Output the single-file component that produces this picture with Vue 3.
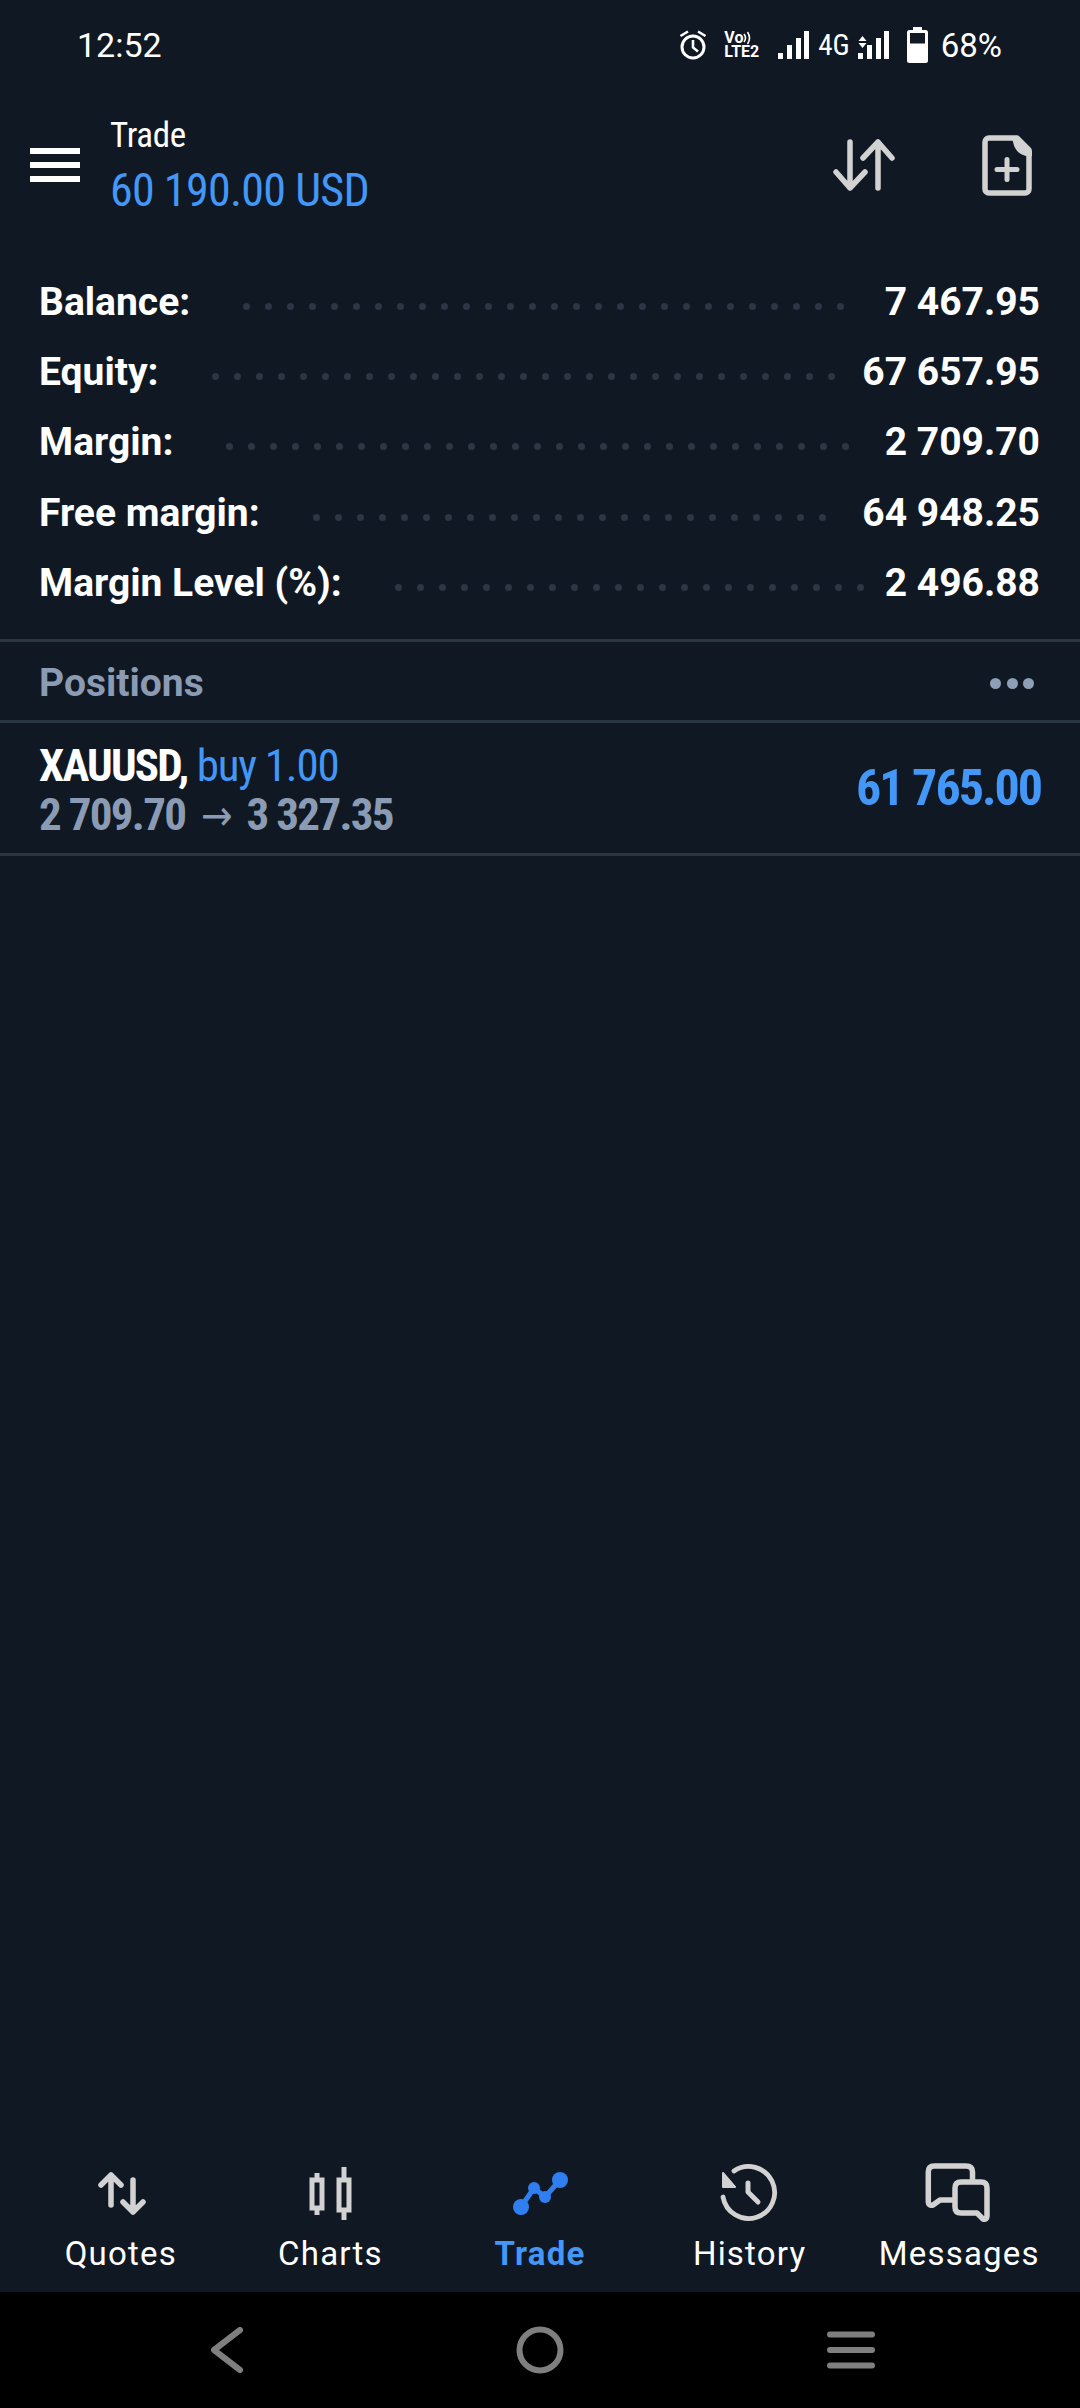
<template>
  <div class="screen">
    <div class="status-bar">
      <span class="time">12:52</span>
      <div class="status-icons">
        <svg class="alarm" width="28" height="30" viewBox="0 0 28 30" fill="none" stroke="#fff">
          <circle cx="14" cy="17" r="11" stroke-width="3" />
          <path d="M14 10v7.500l5 4" stroke-width="2.600" />
          <path d="M1.500 6L9 1.500M26.500 6L19 1.500" stroke-width="2.600" />
        </svg>
        <div class="volte">
          <span>Vo<br />LTE2</span>
          <svg class="volte-waves" width="12" height="14" viewBox="0 0 12 14" fill="none" stroke="#fff" stroke-width="1.600">
            <path d="M2 3q3 4 0 8M5.500 1q4 6 0 12" />
          </svg>
        </div>
        <svg class="signal" width="31" height="28" viewBox="0 0 31 28" fill="#fff">
          <rect x="0" y="22" width="5" height="6" />
          <rect x="9" y="14" width="5" height="14" />
          <rect x="18" y="7" width="5" height="21" />
          <rect x="26" y="0" width="5" height="28" />
        </svg>
        <span class="net">4G</span>
        <svg class="signal-two" width="31" height="28" viewBox="0 0 31 28" fill="#fff">
          <path d="M4.500 5l4 5h-8zM4.500 17l-4-5h8z" />
          <rect x="0" y="22" width="5" height="6" />
          <rect x="9" y="14" width="5" height="14" />
          <rect x="18" y="7" width="5" height="21" />
          <rect x="26" y="0" width="5" height="28" />
        </svg>
        <svg class="battery" width="21" height="36" viewBox="0 0 21 36" fill="#fff">
          <path d="M6 0h9v3h3.500q2.500 0 2.500 2.500v28q0 2.500-2.500 2.500h-16q-2.500 0-2.500-2.500v-28q0-2.500 2.500-2.500h3.500z" />
          <rect x="3" y="6" width="15" height="10.500" fill="#101923" />
        </svg>
        <span class="percent">68%</span>
      </div>
    </div>

    <header class="app-header">
      <div class="burger"><span></span><span></span><span></span></div>
      <div class="titles">
        <div class="title cond">Trade</div>
        <div class="subtitle cond">60 190.00 USD</div>
      </div>
      <svg class="sort-icon" width="70" height="60" viewBox="0 0 70 60" fill="none" stroke="#d2d2d2" stroke-width="5.500" stroke-linecap="round" stroke-linejoin="round">
        <path d="M21 7v46M7 37l14 16 15-16" />
        <path d="M49 53V7M34 23L49 7l14 16" />
      </svg>
      <svg class="doc-icon" width="50" height="61" viewBox="0 0 50 61" fill="none">
        <path d="M8 3h27l12 12v39a4 4 0 0 1-4 4H7a4 4 0 0 1-4-4V7a4 4 0 0 1 4-4z" stroke="#d2d2d2" stroke-width="5.500" stroke-linejoin="round" />
        <path d="M30 1h5l15 15v5q-18 2-20-20z" fill="#d2d2d2" />
        <path d="M25 24.500v20M15 34.500h20" stroke="#d2d2d2" stroke-width="5" stroke-linecap="round" />
      </svg>
    </header>

    <section class="summary">
      <div v-for="row in summary" :key="row.label" class="summary-row">
        <span class="summary-label">{{ row.label }}</span>
        <span class="dots">
          <i v-for="n in row.dots" :key="n"></i>
        </span>
        <span class="summary-value">{{ row.value }}</span>
      </div>
    </section>

    <div class="section-head">
      <span>Positions</span>
      <div class="more"><i></i><i></i><i></i></div>
    </div>

    <div class="position">
      <div class="position-info cond">
        <div class="position-line"><b>XAUUSD,</b> <span class="blue">buy 1.00</span></div>
        <div class="position-prices">2 709.70 <span class="arrow">→</span> 3 327.35</div>
      </div>
      <div class="profit cond">61 765.00</div>
    </div>

    <div class="spacer"></div>

    <nav class="tabs">
      <div v-for="tab in tabs" :key="tab.name" class="tab" :class="{ active: tab.name === 'Trade' }">
        <svg width="80" height="64" viewBox="0 0 80 64" fill="none" v-html="tab.icon"></svg>
        <span>{{ tab.name }}</span>
      </div>
    </nav>

    <div class="system-nav">
      <svg width="32" height="46" viewBox="0 0 32 46" fill="none" stroke="#7f7f7f" stroke-width="6" stroke-linecap="round" stroke-linejoin="round">
        <path d="M29 3L3 23l26 20" />
      </svg>
      <svg width="48" height="48" viewBox="0 0 48 48" fill="none" stroke="#7f7f7f" stroke-width="6">
        <circle cx="24" cy="24" r="20.500" />
      </svg>
      <svg class="recents" width="48" height="38" viewBox="0 0 48 38" fill="none" stroke="#7f7f7f" stroke-width="6" stroke-linecap="round">
        <path d="M3 3.500h42M3 19h42M3 34.500h42" />
      </svg>
    </div>
  </div>
</template>

<script setup>
const summary = [
  { label: 'Balance:', value: '7 467.95', dots: 28 },
  { label: 'Equity:', value: '67 657.95', dots: 29 },
  { label: 'Margin:', value: '2 709.70', dots: 29 },
  { label: 'Free margin:', value: '64 948.25', dots: 24 },
  { label: 'Margin Level (%):', value: '2 496.88', dots: 22 }
]

const grey = 'stroke="#d2d2d2" stroke-linecap="round" stroke-linejoin="round"'

const tabs = [
  {
    name: 'Quotes',
    icon: `<g ${grey} stroke-width="5.500"><path d="M30 45V15M20 25l10-10 10 10" /><path d="M52 20v32M42 42l10 10 10-10" /></g>`
  },
  {
    name: 'Charts',
    icon: `<g stroke="#d2d2d2" stroke-width="5"><rect x="22" y="20" width="10" height="28" /><rect x="49" y="20" width="10" height="30" /><path d="M27 13v7M27 48v7M54 7v13M54 50v10" /></g>`
  },
  {
    name: 'Trade',
    icon: `<path d="M21 47L34 28l11 9 15-17" stroke="#2f7ff0" stroke-width="5" stroke-linecap="round" stroke-linejoin="round" /><g fill="#2f7ff0"><circle cx="21" cy="47" r="8" /><circle cx="34" cy="28" r="6" /><circle cx="45" cy="37" r="6" /><circle cx="60" cy="20" r="8" /></g>`
  },
  {
    name: 'History',
    icon: `<g ${grey} stroke-width="4.800"><path d="M13 37A26 26 0 1 0 24 11" /><path d="M38 23v9l10 10" stroke-width="5" /></g><path d="M13 13v14h12z" fill="#d2d2d2" stroke="#d2d2d2" stroke-width="2" stroke-linejoin="round" />`
  },
  {
    name: 'Messages',
    icon: `<g ${grey} stroke-width="5.500"><path d="M33 40H21l-7 5q-4.700 1-4.700-3V12q0-6 6-6H47q6.500 0 6.500 6v9" /><path d="M42 22h20q6 0 6 6v28q0 4-4 3l-6-6H42q-6 0-6-6V28q0-6 6-6z" /></g>`
  }
]
</script>

<style scoped>
.screen {
  width: 1080px;
  height: 2408px;
  display: flex;
  flex-direction: column;
  background: #101923;
  color: #fff;
  font-family: Roboto, "Noto Sans", sans-serif;
  overflow: hidden;
}

.cond {
  font-family: "Roboto Condensed", Roboto, sans-serif;
  font-stretch: 75%;
}

.status-bar {
  height: 90px;
  flex: none;
  display: flex;
  align-items: center;
  justify-content: space-between;
  padding: 0 78px 0 77px;
}

.time {
  font-size: 34px;
}

.status-icons {
  display: flex;
  align-items: center;
}

.status-icons svg {
  display: block;
}

.alarm { margin-right: 17px; }

.volte {
  position: relative;
  width: 37px;
  margin-right: 17px;
  font-size: 16px;
  font-weight: 700;
  line-height: 14px;
  white-space: nowrap;
}

.volte-waves {
  position: absolute;
  top: 0;
  left: 18px;
}

.net { font-family: "Roboto Condensed", Roboto, sans-serif; font-stretch: 75%; font-size: 29px; margin: 0 8px 0 9px; }
.signal-two { margin-right: 18px; }
.percent { font-size: 33px; margin-left: 13px; }

.app-header {
  height: 150px;
  flex: none;
  display: flex;
  align-items: center;
  padding: 0 48px 0 30px;
}

.burger {
  width: 50px;
  margin-right: 30px;
  display: flex;
  flex-direction: column;
  gap: 8px;
}

.burger span {
  height: 6px;
  background: #fff;
}

.titles {
  flex: 1;
}

.title {
  font-size: 35px;
  line-height: 50px;
  letter-spacing: -0.300px;
}

.subtitle {
  font-size: 46px;
  line-height: 58px;
  letter-spacing: -0.700px;
  color: #4397f7;
}

.sort-icon { margin-right: 83px; }

.summary {
  padding: 27px 40px 0 39px;
}

.summary-row {
  height: 70.200px;
  display: flex;
  align-items: center;
  font-size: 39px;
  font-weight: 700;
}

.dots {
  flex: 1;
  display: flex;
  gap: 15px;
  margin-left: 53px;
  padding-top: 9px;
}

.dots i {
  flex: none;
  width: 7px;
  height: 7px;
  border-radius: 50%;
  background: #2c3644;
}

.section-head {
  margin-top: 21px;
  height: 73px;
  flex: none;
  display: flex;
  align-items: center;
  justify-content: space-between;
  padding: 5px 39px 0;
  border-top: 3px solid #2b3643;
  border-bottom: 3px solid #2b3643;
  font-size: 39px;
  font-weight: 700;
  color: #8a9bb3;
}

.more {
  display: flex;
  gap: 5.500px;
  margin-right: 7px;
}

.more i {
  width: 11px;
  height: 11px;
  border-radius: 50%;
  background: #8f9fb6;
}

.position {
  height: 130px;
  flex: none;
  display: flex;
  align-items: center;
  justify-content: space-between;
  padding: 0 39px;
  border-bottom: 3px solid #2b3643;
}

.position-info {
  padding-top: 5px;
}

.position-line {
  font-size: 45px;
  line-height: 49px;
  letter-spacing: -1.200px;
}

.position-line b {
  letter-spacing: -1.800px;
}

.blue {
  color: #4397f7;
}

.position-prices {
  font-size: 45px;
  line-height: 49px;
  font-weight: 700;
  letter-spacing: -1.700px;
  color: #8a9bb3;
}

.arrow {
  font-family: "DejaVu Sans", sans-serif;
  font-weight: 400;
  font-size: 42px;
  margin: 0 7px;
}

.profit {
  font-size: 50px;
  font-weight: 700;
  letter-spacing: -2px;
  color: #4397f7;
}

.spacer {
  flex: 1;
}

.tabs {
  height: 138px;
  flex: none;
  box-sizing: border-box;
  display: grid;
  grid-template-columns: repeat(5, 1fr);
  padding: 6px 16px 0;
}

.tab {
  display: flex;
  flex-direction: column;
  align-items: center;
  font-size: 33px;
  letter-spacing: 1.200px;
  color: #fff;
}

.tab svg {
  display: block;
  margin-bottom: 10px;
}

.tab.active {
  color: #4397f7;
  font-weight: 700;
}

.system-nav {
  height: 116px;
  flex: none;
  background: #000;
  display: grid;
  grid-template-columns: repeat(3, 1fr);
  justify-items: center;
  align-items: center;
  padding: 0 70px;
}

.recents {
  margin-right: 5px;
}
</style>

<style>
html, body {
  background: #101923;
}
</style>
